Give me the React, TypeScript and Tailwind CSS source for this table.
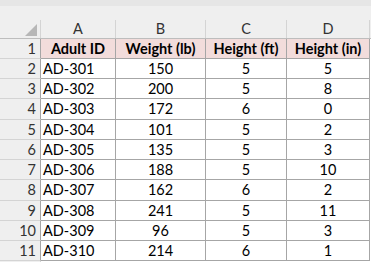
const cols = [
  { letter: 'A', w: 'w-[75px]' },
  { letter: 'B', w: 'w-[90px]' },
  { letter: 'C', w: 'w-[81px]' },
  { letter: 'D', w: 'w-[83px]' },
]

const rows = [
  ['AD-301', '150', '5', '5'],
  ['AD-302', '200', '5', '8'],
  ['AD-303', '172', '6', '0'],
  ['AD-304', '101', '5', '2'],
  ['AD-305', '135', '5', '3'],
  ['AD-306', '188', '5', '10'],
  ['AD-307', '162', '6', '2'],
  ['AD-308', '241', '5', '11'],
  ['AD-309', '96', '5', '3'],
  ['AD-310', '214', '6', '1'],
]

const headers = ['Adult ID', 'Weight (lb)', 'Height (ft)', 'Height (in)']

// a few rows are one pixel taller, as the sheet rows come out at ~20.2px
const tall = [2, 6, 10]

export default function App() {
  return (
    <div className="w-[371px] h-[262px] overflow-hidden bg-white font-['Lato',sans-serif] text-[14.5px] text-black">
      <div className="h-[6px] bg-[#e6e6e6]" />
      <div className="h-[14px] bg-[#efefef]" />

      {/* column letters */}
      <div className="flex h-[19px] bg-[#efefef] border-b border-[#bdbdbd]">
        <div className="relative w-[41px] border-r border-[#d4d4d4]">
          <div className="absolute right-[3px] bottom-[2px] w-0 h-0 border-l-[12px] border-l-transparent border-b-[12px] border-b-[#b7b7b7]" />
        </div>
        {cols.map((c) => (
          <div
            key={c.letter}
            className={`${c.w} flex items-center justify-center border-r border-[#d4d4d4] text-[#333]`}
          >
            {c.letter}
          </div>
        ))}
      </div>

      {/* header row */}
      <div className="flex h-[20px]">
        <div className="w-[41px] flex items-center justify-end pr-[4px] bg-[#efefef] border-r border-[#a6a6a6] border-b border-b-[#d4d4d4] text-[#333]">
          1
        </div>
        {headers.map((h, i) => (
          <div
            key={h}
            className={`${cols[i].w} flex items-center justify-center bg-[#f2dcdb] border-r border-b border-[#a6a6a6] font-bold`}
          >
            {h}
          </div>
        ))}
      </div>

      {rows.map((r, ri) => (
        <div key={r[0]} className={`flex ${tall.includes(ri) ? 'h-[21px]' : 'h-[20px]'}`}>
          <div className="w-[41px] flex items-center justify-end pr-[4px] bg-[#efefef] border-r border-[#a6a6a6] border-b border-b-[#d4d4d4] text-[#333]">
            {ri + 2}
          </div>
          {r.map((v, i) => (
            <div
              key={i}
              className={`${cols[i].w} flex items-center ${i === 0 ? 'justify-start pl-[2px]' : 'justify-center'} border-r border-b border-[#a6a6a6]`}
            >
              {v}
            </div>
          ))}
        </div>
      ))}

      <div className="flex h-[20px]">
        <div className="w-[41px] bg-[#efefef] border-r border-[#d4d4d4]" />
      </div>
    </div>
  )
}
